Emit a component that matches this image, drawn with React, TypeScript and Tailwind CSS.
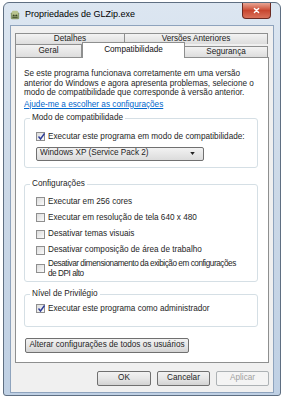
import React from "react";

const Check = ({ checked }: { checked?: boolean }) => (
  <span className="relative block h-[9px] w-[9px] shrink-0 border border-[#8f8f8f] bg-gradient-to-br from-[#dcdcdc] to-[#fbfbfb]">
    {checked && (
      <svg viewBox="0 0 9 9" className="absolute left-[0px] top-[-1px] h-[9px] w-[9px]">
        <path d="M1.5 4.5 L3.5 7 L7.5 1.5" fill="none" stroke="#2f3f9a" strokeWidth="1.4" />
      </svg>
    )}
  </span>
);

const Option = ({ label, checked }: { label: React.ReactNode; checked?: boolean }) => (
  <div className="flex h-[10px] items-center gap-[3px]">
    <Check checked={checked} />
    <span className="whitespace-nowrap leading-[10px]">{label}</span>
  </div>
);

const Group = ({ title, children, className }: { title: string; children: React.ReactNode; className?: string }) => (
  <div className={"relative w-[234px] rounded-[3px] border border-[#d5dfe5] " + (className || "")}>
    <span className="absolute left-[5px] top-[-6px] bg-white px-[2px] leading-[10px] text-[#1e1e1e]">{title}</span>
    {children}
  </div>
);

const Btn = ({ children, className }: { children: React.ReactNode; className?: string }) => (
  <div
    className={
      "flex h-[15px] items-center justify-center rounded-[2px] border border-[#707070] bg-gradient-to-b from-[#f2f2f2] via-[#e6e6e6] to-[#d3d3d3] " +
      (className || "")
    }
  >
    {children}
  </div>
);

const tabIdle = "flex items-center justify-center border border-b-0 border-[#8e8f8f] bg-gradient-to-b from-[#f3f3f3] to-[#dddddd]";

export default function App() {
  return (
    <div
      className="relative h-[400px] w-[285px] overflow-hidden bg-white text-[8.2px] text-[#1e1e1e]"
      style={{ fontFamily: '"Liberation Sans", Arial, sans-serif' }}
    >
      {/* window frame */}
      <div className="ml-[3px] mt-[2px] flex h-[394px] w-[278px] flex-col rounded-t-[6px] rounded-b-[3px] border border-[#5f6f82] bg-gradient-to-b from-[#dce6f1] via-[#cbd8e7] to-[#bfd0e4] px-[6px] pb-[2px]">
        {/* title bar */}
        <div className="relative flex h-[22px] shrink-0 items-center pt-[1px]">
          <svg viewBox="0 0 12 12" className="ml-[0px] h-[10px] w-[10px]">
            <rect x="1" y="3" width="10" height="8" rx="1" fill="#8a9a6a" />
            <rect x="2.5" y="1" width="7" height="5" rx="1" fill="#b9c48e" />
            <circle cx="4.5" cy="6.5" r="1" fill="#3b4226" />
            <circle cx="7.5" cy="6.5" r="1" fill="#3b4226" />
            <rect x="3" y="8.5" width="6" height="1.2" fill="#4f5a33" />
          </svg>
          <span className="ml-[5px] text-[9px] text-black">Propriedades de GLZip.exe</span>
          <div className="absolute right-[3px] top-[0px] flex h-[16px] w-[29px] items-center justify-center rounded-b-[4px] border border-t-0 border-[#6b2a22] bg-gradient-to-b from-[#e8a493] via-[#c8462f] to-[#d9715a]">
            <svg viewBox="0 0 10 10" className="h-[7px] w-[7px]">
              <path d="M2 2 L8 8 M8 2 L2 8" stroke="#ffffff" strokeWidth="2" strokeLinecap="round" />
            </svg>
          </div>
        </div>

        {/* client area */}
        <div className="flex flex-1 flex-col border border-[#8ea3bd] bg-[#f0f0f0] px-[4px] pt-[7px]">
          {/* tabs */}
          <div className="flex h-[11px] text-[#222]">
            <div className={tabIdle + " w-[110px]"}>Detalhes</div>
            <div className={tabIdle + " w-[143px] border-l-0"}>Versões Anteriores</div>
          </div>
          <div className="relative flex h-[13px] items-end text-[#222]">
            <div className={tabIdle + " h-[13px] w-[67px]"}>Geral</div>
            <div className="z-10 -mb-[1px] -mt-[2px] flex h-[16px] w-[103px] items-start justify-center border border-b-0 border-[#8e8f8f] bg-white pt-[1px] text-[#111]">Compatibilidade</div>
            <div className={tabIdle + " h-[11px] w-[83px] border-l-0"}>Segurança</div>
          </div>

          {/* panel */}
          <div className="flex h-[306px] w-[254px] flex-col border border-[#8e8f8f] bg-white pl-[8px] pt-[11px]">
            <p className="whitespace-nowrap leading-[9.5px]">
              Se este programa funcionava corretamente em uma versão
              <br />
              anterior do Windows e agora apresenta problemas, selecione o
              <br />
              modo de compatibilidade que corresponde à versão anterior.
            </p>
            <a className="mt-[1px] leading-[11px] text-[#0066cc] underline">Ajude-me a escolher as configurações</a>

            <Group title="Modo de compatibilidade" className="mt-[8px] h-[50px] pl-[11px] pt-[13px]">
              <Option checked label="Executar este programa em modo de compatibilidade:" />
              <div className="mt-[5px] flex h-[14px] w-[168px] items-center justify-between rounded-[2px] border border-[#707070] bg-gradient-to-b from-[#f2f2f2] to-[#dcdcdc] pl-[3px] pr-[8px]">
                <span>Windows XP (Service Pack 2)</span>
                <svg viewBox="0 0 6 4" className="h-[3px] w-[5px]">
                  <path d="M0 0 L6 0 L3 4 Z" fill="#222" />
                </svg>
              </div>
            </Group>

            <Group title="Configurações" className="mt-[16px] h-[98px] pl-[11px] pt-[12px]">
              <div className="flex flex-col gap-[6.3px]">
                <Option label="Executar em 256 cores" />
                <Option label="Executar em resolução de tela 640 x 480" />
                <Option label="Desativar temas visuais" />
                <Option label="Desativar composição de área de trabalho" />
                <div className="-mt-[3px] flex items-start gap-[3px]">
                  <div className="pt-[5px]">
                    <Check />
                  </div>
                  <span className="whitespace-nowrap leading-[10px] tracking-[-0.45px]">
                    Desativar dimensionamento da exibição em configurações
                    <br />
                    de DPI alto
                  </span>
                </div>
              </div>
            </Group>

            <Group title="Nível de Privilégio" className="mt-[12px] h-[33px] pl-[11px] pt-[9px]">
              <Option checked label="Executar este programa como administrador" />
            </Group>

            <Btn className="ml-[1px] mt-[11px] w-[164px]">Alterar configurações de todos os usuários</Btn>
          </div>

          {/* dialog buttons */}
          <div className="mt-[8px] flex gap-[6px] pl-[82px]">
            <Btn className="w-[54px] border-[#3c7fb1] from-[#eaf6fd] via-[#d9f0fc] to-[#a7d9f5]">OK</Btn>
            <Btn className="w-[53px]">Cancelar</Btn>
            <Btn className="w-[53px] border-[#adb2b5] from-[#f4f4f4] via-[#f4f4f4] to-[#f4f4f4] text-[#a0a0a0]">Aplicar</Btn>
          </div>
        </div>
      </div>
    </div>
  );
}
